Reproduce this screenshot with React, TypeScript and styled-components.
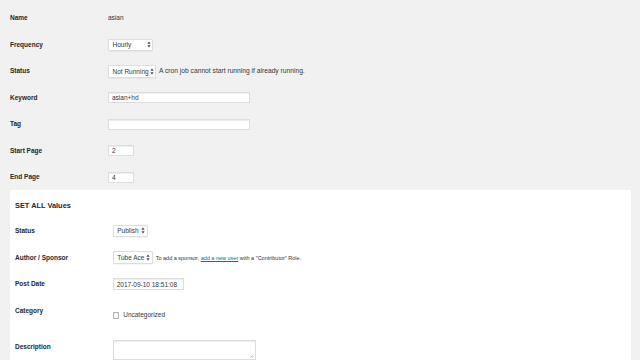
import styled, { createGlobalStyle } from 'styled-components'

const GlobalStyle = createGlobalStyle`
    html, body {
        margin: 0;
        padding: 0;
        background: #f1f1f1;
        font-family: "Liberation Sans", Arial, sans-serif;
        color: #444;
    }
    * {
        box-sizing: border-box;
    }
`

const Page = styled.div`
    width: 640px;
    height: 360px;
    overflow: hidden;
    padding-left: 10px;
`

const FormTable = styled.div`
    padding-top: 4.75px;
`

const Row = styled.div<{ $h?: number; $top?: boolean; $col?: number }>`
    display: grid;
    grid-template-columns: ${p => p.$col ?? 98}px 1fr;
    height: ${p => p.$h ?? 26.5}px;
    align-items: ${p => (p.$top ? 'start' : 'center')};
`

const Label = styled.div<{ $mt?: number }>`
    font-size: 6.5px;
    line-height: 8px;
    font-weight: 700;
    color: #23282d;
    margin-top: ${p => p.$mt ?? 0}px;
`

const Cell = styled.div<{ $mt?: number }>`
    display: flex;
    align-items: center;
    gap: 3px;
    margin-top: ${p => p.$mt ?? 0}px;
`

const Value = styled.span`
    font-size: 6.5px;
    line-height: 8px;
    color: #32373c;
`

const Note = styled.span<{ $small?: boolean }>`
    font-size: ${p => (p.$small ? 5.5 : 6.7)}px;
    line-height: 8px;
    color: #32373c;
    white-space: nowrap;
    a {
        color: #0073aa;
        text-decoration: underline;
    }
`

const SelectBox = styled.div<{ $w: number; $h?: number }>`
    width: ${p => p.$w}px;
    height: ${p => p.$h ?? 12}px;
    background: #fff;
    border: 1px solid #ddd;
    border-radius: 1px;
    box-shadow: 0 1px 1px rgba(0, 0, 0, 0.04);
    display: flex;
    align-items: center;
    justify-content: space-between;
    padding: 0 1.5px 0 3.5px;
    font-size: 6.5px;
    color: #32373c;
    white-space: nowrap;
    overflow: hidden;
    svg {
        flex-shrink: 0;
    }
`

const TextInput = styled.div<{ $w: number; $h?: number }>`
    width: ${p => p.$w}px;
    height: ${p => p.$h ?? 11}px;
    background: #fff;
    border: 1px solid #ddd;
    box-shadow: inset 0 1px 1px rgba(0, 0, 0, 0.07);
    display: flex;
    align-items: center;
    padding: 0 3px;
    font-size: 6.5px;
    color: #32373c;
    white-space: nowrap;
`

const Panel = styled.div`
    background: #fff;
    margin-right: 9px;
    padding-left: 5px;
    height: 170px;
`

const Heading = styled.h3`
    margin: 0;
    padding-top: 11px;
    height: 27.4px;
    font-size: 7.4px;
    line-height: 10px;
    font-weight: 700;
    color: #23282d;
`

const CheckBox = styled.span`
    width: 6.5px;
    height: 6.5px;
    border: 1px solid #b4b9be;
    background: #fff;
    box-shadow: inset 0 1px 1px rgba(0, 0, 0, 0.1);
    display: inline-block;
    margin-right: 1px;
`

const TextArea = styled.div`
    position: relative;
    width: 143px;
    height: 20px;
    background: #fff;
    border: 1px solid #ddd;
    box-shadow: inset 0 1px 1px rgba(0, 0, 0, 0.07);
    svg {
        position: absolute;
        right: 1px;
        bottom: 1px;
    }
`

const Arrows = () => (
    <svg width="4" height="7" viewBox="0 0 4 7">
        <path d="M2 0.5 L3.6 2.8 L0.4 2.8 Z" fill="#444" />
        <path d="M2 6.5 L3.6 4.2 L0.4 4.2 Z" fill="#444" />
    </svg>
)

const Select = ({ w, h, children }: { w: number; h?: number; children: string }) => (
    <SelectBox $w={w} $h={h}>
        <span>{children}</span>
        <Arrows />
    </SelectBox>
)

const App = () => {
    return (
        <Page>
            <GlobalStyle />
            <FormTable>
                <Row>
                    <Label>Name</Label>
                    <Value>asian</Value>
                </Row>
                <Row>
                    <Label>Frequency</Label>
                    <Cell><Select w={45}>Hourly</Select></Cell>
                </Row>
                <Row>
                    <Label>Status</Label>
                    <Cell>
                        <Select w={48} h={13}>Not Running</Select>
                        <Note>A cron job cannot start running if already running.</Note>
                    </Cell>
                </Row>
                <Row>
                    <Label>Keyword</Label>
                    <Cell><TextInput $w={142}>asian+hd</TextInput></Cell>
                </Row>
                <Row>
                    <Label>Tag</Label>
                    <Cell><TextInput $w={142} /></Cell>
                </Row>
                <Row>
                    <Label>Start Page</Label>
                    <Cell><TextInput $w={26}>2</TextInput></Cell>
                </Row>
                <Row>
                    <Label>End Page</Label>
                    <Cell><TextInput $w={26}>4</TextInput></Cell>
                </Row>
            </FormTable>

            <Panel>
                <Heading>SET ALL Values</Heading>
                <Row $col={97.7} $h={26.6}>
                    <Label>Status</Label>
                    <Cell><Select w={35}>Publish</Select></Cell>
                </Row>
                <Row $col={97.7} $h={26.6}>
                    <Label>Author / Sponsor</Label>
                    <Cell>
                        <Select w={40} h={13}>Tube Ace</Select>
                        <Note $small>To add a sponsor, <a href="#">add a new user</a> with a "Contributor" Role.</Note>
                    </Cell>
                </Row>
                <Row $col={97.7} $h={26.6}>
                    <Label>Post Date</Label>
                    <Cell><TextInput $w={71.5} $h={12}>2017-09-10 18:51:08</TextInput></Cell>
                </Row>
                <Row $col={97.7} $h={36} $top>
                    <Label $mt={9.5}>Category</Label>
                    <Cell $mt={14}>
                        <CheckBox />
                        <Value>Uncategorized</Value>
                    </Cell>
                </Row>
                <Row $col={97.7} $h={30} $top>
                    <Label $mt={9.1}>Description</Label>
                    <Cell $mt={6.1}>
                        <TextArea>
                            <svg width="4" height="4" viewBox="0 0 4 4">
                                <path d="M0.5 3.5 L3.5 0.5 M2 3.5 L3.5 2" stroke="#999" strokeWidth="0.6" />
                            </svg>
                        </TextArea>
                    </Cell>
                </Row>
            </Panel>
        </Page>
    )
}

export default App
